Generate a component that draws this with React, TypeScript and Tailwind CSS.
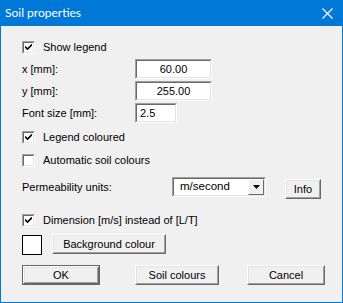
import React from 'react'

// ── Classic Win32 pieces ─────────────────────────────────────────────

function Sunken({ className = '', children }: { className?: string; children?: React.ReactNode }) {
  return (
    <div className={`border border-t-[#a0a0a0] border-l-[#a0a0a0] border-b-white border-r-white ${className}`}>
      <div className="w-full h-full border border-t-[#696969] border-l-[#696969] border-b-[#e3e3e3] border-r-[#e3e3e3] bg-white flex items-center">
        {children}
      </div>
    </div>
  )
}

function Button({ label, className = '', isDefault = false }: { label: string; className?: string; isDefault?: boolean }) {
  const inner = (
    <div className="w-full h-full border border-t-white border-l-white border-b-[#696969] border-r-[#696969]">
      <div className="w-full h-full border border-t-[#e3e3e3] border-l-[#e3e3e3] border-b-[#a0a0a0] border-r-[#a0a0a0] bg-[#f0f0f0] flex items-center justify-center">
        {label}
      </div>
    </div>
  )
  if (isDefault) {
    return <div className={`border border-[#646464] ${className}`}>{inner}</div>
  }
  return <div className={className}>{inner}</div>
}

function Checkbox({ checked, label }: { checked: boolean; label: string }) {
  return (
    <div className="h-[13px] flex items-center">
      <div className="w-[13px] h-[13px] border border-t-[#a0a0a0] border-l-[#a0a0a0] border-b-white border-r-white">
        <div className="w-full h-full border border-t-[#696969] border-l-[#696969] border-b-[#e3e3e3] border-r-[#e3e3e3] bg-white flex items-center justify-center">
          {checked && (
            <svg width="7" height="7" viewBox="0 0 7 7">
              <path d="M0 2.5 L2.5 5 L7 0.5" stroke="#000" strokeWidth="1.6" fill="none" />
            </svg>
          )}
        </div>
      </div>
      <span className="ml-[8px]">{label}</span>
    </div>
  )
}

function Field({ label, value, width = 'w-[77px]', center = true }: { label: string; value: string; width?: string; center?: boolean }) {
  return (
    <div className="h-[20px] flex items-center">
      <span className="w-[113px]">{label}</span>
      <Sunken className={`${width} h-[20px]`}>
        <span className={center ? 'w-full text-center' : 'pl-[3px]'}>{value}</span>
      </Sunken>
    </div>
  )
}

// ── Dialog ───────────────────────────────────────────────────────────

export default function App() {
  return (
    <div className="w-[343px] h-[303px] bg-[#f0f0f0] border-x border-b border-[#0078d7] flex flex-col text-[11px] text-black font-['Liberation_Sans',Arial,sans-serif] leading-none">
      <div className="h-[26px] -mx-px bg-[#0078d7] flex items-center justify-between px-[5px] shrink-0">
        <span className="text-white text-[12px] font-['Lato',sans-serif]">Soil properties</span>
        <svg width="11" height="11" viewBox="0 0 11 11" className="mr-[5px]">
          <path d="M0.5 0.5 L10.5 10.5 M10.5 0.5 L0.5 10.5" stroke="#fff" strokeWidth="1.1" />
        </svg>
      </div>

      <div className="pl-[21px] pt-[15px] flex flex-col">
        <Checkbox checked label="Show legend" />
        <div className="mt-[5px]">
          <Field label="x [mm]:" value="60.00" />
        </div>
        <div className="mt-[2px]">
          <Field label="y [mm]:" value="255.00" />
        </div>
        <div className="mt-[2px]">
          <Field label="Font size [mm]:" value="2.5" width="w-[42px]" center={false} />
        </div>

        <div className="mt-[8px]">
          <Checkbox checked label="Legend coloured" />
        </div>
        <div className="mt-[10px]">
          <Checkbox checked={false} label="Automatic soil colours" />
        </div>

        <div className="mt-[10px] h-[22px] flex items-start">
          <span className="w-[150px] h-[20px] flex items-center">Permeability units:</span>
          <Sunken className="w-[94px] h-[20px]">
            <span className="flex-1 pl-[6px] text-[11.5px]">m/second</span>
            <div className="w-[16px] h-full border border-t-white border-l-white border-b-[#696969] border-r-[#696969] bg-[#f0f0f0] flex items-center justify-center">
              <svg width="7" height="4" viewBox="0 0 7 4">
                <path d="M0 0 H7 L3.5 4 Z" fill="#000" />
              </svg>
            </div>
          </Sunken>
          <Button label="Info" className="ml-[19px] mt-[2px] w-[36px] h-[20px]" />
        </div>

        <div className="mt-[15px]">
          <Checkbox checked label="Dimension [m/s] instead of [L/T]" />
        </div>

        <div className="mt-[7px] h-[21px] flex items-start">
          <div className="mt-px w-[20px] h-[20px] border border-black bg-white" />
          <Button label="Background colour" className="ml-[10px] w-[114px] h-[20px]" />
        </div>

        <div className="mt-[10px] flex">
          <Button label="OK" isDefault className="w-[78px] h-[20px]" />
          <Button label="Soil colours" className="ml-[35px] w-[84px] h-[20px]" />
          <Button label="Cancel" className="ml-[28px] w-[78px] h-[20px]" />
        </div>
      </div>
    </div>
  )
}
